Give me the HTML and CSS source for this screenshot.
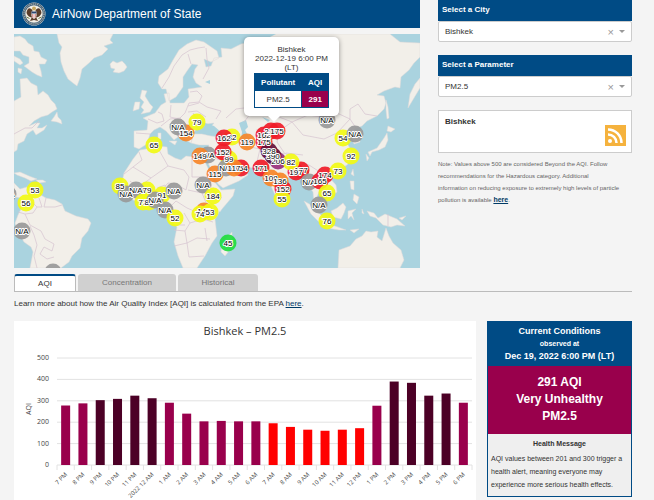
FILE: index.html
```html
<!DOCTYPE html>
<html lang="en">
<head>
  <meta charset="UTF-8">
  <meta name="viewport" content="width=device-width, initial-scale=1.0">
  <title>AirNow Department of State</title>
  <link rel="stylesheet" href="styles.css">
</head>
<body>
  <main class="page">
    <div class="top">
      <section class="map-column">
        <header class="site-header">
          <svg class="seal" viewBox="0 0 48 48" aria-hidden="true">
            <circle cx="24" cy="24" r="23" fill="#e8e4d8"/>
            <circle cx="24" cy="24" r="20" fill="none" stroke="#48647c" stroke-width="5"/>
            <circle cx="24" cy="24" r="20" fill="none" stroke="#d8d4c0" stroke-width="2" stroke-dasharray="2 2"/>
            <circle cx="24" cy="24" r="16" fill="#f4f2ea"/>
            <path d="M21 17 C16 9 10 13 9 22 C11 28 16 31 21 31Z M27 17 C32 9 38 13 39 22 C37 28 32 31 27 31Z" fill="#5a3d2a"/>
            <path d="M20 30 L16 38 L24 36 L32 38 L28 30Z" fill="#5a3d2a"/>
            <path d="M15 33 L9 30 M33 33 L39 30" stroke="#687848" stroke-width="2"/>
            <circle cx="24" cy="13" r="4" fill="#c8a860"/>
            <path d="M19 19 H29 V28 Q28 32 24 34 Q20 32 19 28Z" fill="#fff"/>
            <path d="M19 19 H29 V23 H19Z" fill="#2c4470"/>
            <path d="M21 24 V31 M24 24 V33 M27 24 V31" stroke="#b03030" stroke-width="1"/>
          </svg>
          <h1>AirNow Department of State</h1>
        </header>

        <div class="map">
          <svg class="map-canvas" viewBox="14 34 406 234" role="img" aria-label="World air quality map">
            <rect x="14" y="34" width="406" height="234" fill="#aad3df"/>
            <g class="land">
              <!-- Americas and Greenland -->
              <path d="M14 37 L20 36 25 39 28 43 33 46 34 51 39 52 41 57 47 60 45 64 39 64 41 71 42 77 37 75 32 72 28 69 24 66 29 63 29 57 23 55 20 51 14 51Z"/>
              <path d="M14 56 L20 59 23 63 20 65 14 61Z M18 68 L22 69 21 74 18 72Z"/>
              <path d="M20 79 L27 78 31 83 37 86 38 95 43 91 48 95 51 100 55 104 57 109 52 112 48 115 41 117 34 121 29 126 36 123 40 123 37 128 42 128 47 125 44 130 36 135 33 130 27 134 24 141 18 144 17 150 14 152 V101 L21 97Z"/>
              <path d="M57 112 L58 117 61 120 62 124 57 122 51 121 54 117Z"/>
              <path d="M57 34 L59 43 62 47 60 53 61 62 64 71 68 79 73 83 77 86 80 78 82 69 89 63 94 58 102 55 108 49 104 46 113 43 110 40 113 34Z"/>
              <path d="M110 64 L113 61 117 63 122 61 125 64 127 67 124 71 119 73 113 72 115 69 111 68Z"/>
              <path d="M14 173 L20 172 29 176 37 179 31 181 25 178 17 175Z M36 180 L43 180 46 182 39 183Z M14 183 L20 189 27 187 34 188 39 194 46 198 55 200 62 204 65 211 76 216 88 219 91 223 88 231 82 238 80 248 72 256 69 262 61 268 H30 L33 252 31 247 24 242 17 230 15 223 18 215 22 207 21 198 16 197 14 194Z"/>
              <!-- Europe and Asia -->
              <path d="M142 90 L147 91 145 96 150 104 153 107 150 112 141 114 144 110 141 107 144 102 140 98Z M135 102 L140 102 139 109 133 111 134 106Z"/>
              <path d="M158 83 L159 76 168 69 173 60 179 50 187 44 196 40 204 42 217 51 219 58 211 62 204 59 206 67 211 66 214 58 222 57 221 48 231 49 241 44 251 42 260 34 H390 L400 42 420 43 V57 L414 63 409 70 401 77 400 88 395 87 384 91 377 95 384 96 386 103 384 109 377 116 367 121 362 126 354 129 359 136 360 142 354 144 352 138 347 135 342 136 346 142 350 148 354 156 347 165 340 169 332 171 328 176 336 185 337 192 330 197 324 193 320 189 317 197 323 208 320 212 314 203 313 192 306 182 302 171 295 171 289 177 284 183 281 195 276 197 270 184 266 173 259 172 253 168 242 166 239 163 232 160 228 155 225 154 231 163 238 170 245 168 248 175 239 181 223 188 218 184 212 171 207 161 206 154 209 145 199 145 191 143 193 134 202 134 211 136 220 137 222 134 210 128 214 123 206 124 199 126 194 132 193 137 191 143 184 139 177 129 171 125 169 124 178 137 174 140 166 131 160 127 154 130 150 134 147 144 139 149 134 147 134 131 147 130 148 121 143 118 155 113 161 105 166 102 164 94 169 93 170 103 184 103 189 97 188 89 202 87 196 83 193 77 195 69 198 65 192 64 187 71 183 77 183 87 176 97 169 101 166 89 162 89Z"/>
              <path d="M169 141 L177 141 175 145Z M158 133 L161 133 161 139 158 139Z"/>
              <!-- Africa -->
              <path d="M140 150 L146 149 158 146 167 147 168 154 175 158 181 160 186 156 203 158 208 168 214 181 221 190 235 189 233 196 222 209 215 219 217 236 212 243 205 256 197 268 H183 L178 256 174 242 177 227 169 218 170 207 164 202 155 200 143 203 133 200 121 187 124 173 133 159Z"/>
              <path d="M232 232 L232 239 229 251 225 256 221 252 222 243Z"/>
              <!-- Asian and Pacific islands -->
              <path d="M388 126 L395 129 391 132 387 131Z M387 133 L388 140 385 147 379 150 372 152 370 156 368 152 377 148 384 138Z M366 154 L369 158 367 161Z"/>
              <path d="M386 100 L388 107 389 118 387 119 386 110Z M420 88 L414 98 408 108 410 94 415 84 420 78Z"/>
              <path d="M284 194 L287 198 285 201Z M351 174 L354 176 353 169Z M350 181 L354 181 354 190 351 189Z M354 194 L359 197 357 204 353 200Z"/>
              <path d="M304 201 L311 205 322 216 325 224 319 222 311 214Z M325 225 L335 226 346 230 339 230 327 228Z M331 211 L337 208 343 203 346 207 344 213 341 219 333 217Z M348 211 L356 209 352 213 354 220 351 216 348 219Z M350 230 L359 229 354 233Z"/>
              <path d="M367 211 L374 213 378 218 385 214 397 219 405 226 397 225 391 227 383 225 376 218 370 216Z M399 218 L406 216 402 220Z M362 209 L364 214 362 213Z"/>
              <path d="M338 268 L339 250 350 246 356 239 362 236 366 231 371 232 378 231 377 237 382 241 386 228 389 236 393 243 401 250 404 260 400 268Z"/>
            </g>
            <g class="water">
              <path d="M196 127 L202 122 208 124 214 126 222 133 211 135 202 133Z M239 123 L246 120 248 127 245 130 250 139 246 145 241 141 242 132Z"/>
              <path d="M200 34 H222 L231 38 227 44 219 41 217 47 210 44Z M250 34 H276 L268 38 256 39Z"/>
              <path d="M313 108 L321 103 323 99 320 101Z M205 82 L210 80 210 84Z M219 211 L222 215 218 217Z M262 117 L270 120 268 122Z"/>
            </g>
            <g class="borders">
              <path d="M14 134 L25 128 32 128 39 121 M34 193 L31 201 37 207 33 213 25 214 18 212 M46 198 L44 207 55 207 62 205 M39 198 L42 207 37 207 M25 214 L30 225 41 231 45 239 54 244 52 251 44 247 40 254 47 259 54 257 M30 226 L34 235 37 245 34 256 37 268"/>
              <path d="M162 88 L169 77 174 66 182 55 190 50 198 48 205 47 M191 64 L188 54 M206 48 L207 59 209 68 203 79 M190 92 L197 91 202 96 199 102 207 107 221 111 216 119 M199 102 L189 103 185 113 179 119 170 117 171 105 M148 119 L157 123 164 121 162 114 158 112 M136 133 L150 134 M161 126 L170 119 180 118 187 125 197 125 M188 106 L199 103 M188 112 L197 111 206 117 M178 120 L181 128 191 132 M193 113 L199 122"/>
              <path d="M139 152 L142 160 133 167 124 174 M133 167 L151 178 168 166 159 150 M168 166 L184 170 189 177 186 190 176 184 168 183 162 190 M192 158 V177 H211 M151 178 L143 184 145 192 139 202 M130 181 L137 187 150 184 M157 188 L165 185 169 193 166 202 M188 190 L202 193 214 188 M202 193 L207 205 201 214 187 208 176 201 170 207 M184 213 L190 223 185 231 174 230 M190 223 L203 219 213 222 M185 231 L187 243 174 246 M187 243 L197 238 210 239 M187 243 L189 257 204 256 M176 225 H185 M206 209 L215 216 M213 192 L222 198 M205 228 L207 241"/>
              <path d="M207 152 L214 158 224 161 229 170 221 179 M222 137 L231 150 239 163 M229 138 L238 142 M245 146 L260 149 256 166 M260 149 L268 153 275 151 284 154 M269 154 L277 160 296 170 M285 153 L294 161 309 165 308 174 316 183 M309 165 L323 174 333 171 M285 154 L277 142 279 131 292 122 308 115 322 117 337 113 350 119 M292 122 L303 135 324 139 337 133 350 119 M350 119 L350 109 358 104 365 114 377 116 M350 119 L356 128 M226 118 L236 109 252 107 263 115 279 117 292 122 M244 122 L251 113 M256 130 L267 131 280 127 M258 139 L269 145 M286 153 L303 155 M318 182 L324 190 M318 174 L325 180 M388 214 V226"/>
            </g>
            <g id="markers"></g>
            <g id="marker-labels"></g>
          </svg>

          <div class="popup">
            <p>Bishkek<br>2022-12-19 6:00 PM (LT)</p>
            <table>
              <tr><th class="pollutant">Pollutant</th><th>AQI</th></tr>
              <tr><td>PM2.5</td><td class="very-unhealthy">291</td></tr>
            </table>
          </div>
        </div>
      </section>

      <aside class="filters">
        <div class="filter">
          <label for="city">Select a City</label>
          <div class="select-box">
            <select id="city"><option>Bishkek</option></select>
            <button type="button" aria-label="Clear city">×</button>
            <span class="caret"></span>
          </div>
        </div>
        <div class="filter">
          <label for="parameter">Select a Parameter</label>
          <div class="select-box">
            <select id="parameter"><option>PM2.5</option></select>
            <button type="button" aria-label="Clear parameter">×</button>
            <span class="caret"></span>
          </div>
        </div>
        <div class="feed">
          <h2>Bishkek</h2>
          <a href="#rss" aria-label="RSS feed">
            <svg viewBox="0 0 21 21">
              <rect width="21" height="21" fill="#f5b23d"/>
              <circle cx="5" cy="16" r="2" fill="#fff"/>
              <path d="M3 9.500 A8.500 8.500 0 0 1 11.500 18 M3 4.500 A13.500 13.500 0 0 1 16.500 18" fill="none" stroke="#fff" stroke-width="2.500"/>
            </svg>
          </a>
        </div>
        <p class="note">Note: Values above 500 are considered Beyond the AQI. Follow recommendations for the Hazardous category. Additional<br>information on reducing exposure to extremely high levels of particle<br>pollution is available <a href="#beyond">here</a>.</p>
      </aside>
    </div>

    <nav class="tabs">
      <button type="button" class="active">AQI</button>
      <button type="button">Concentration</button>
      <button type="button">Historical</button>
    </nav>
    <p class="learn">Learn more about how the Air Quality Index [AQI] is calculated from the EPA <a href="#epa">here</a>.</p>

    <div class="bottom">
      <section class="chart">
        <svg viewBox="14 321 462 179" role="img" aria-label="Hourly AQI">
          <text class="chart-title" x="245" y="335">Bishkek – PM2.5</text>
          <text class="axis-title" transform="translate(31 409) rotate(-90)">AQI</text>
          <g id="grid"></g>
          <g id="bars"></g>
        </svg>
      </section>

      <section class="conditions">
        <div class="conditions-head">
          <h2>Current Conditions</h2>
          <p>observed at</p>
          <h2>Dec 19, 2022 6:00 PM (LT)</h2>
        </div>
        <div class="conditions-value very-unhealthy">291 AQI<br>Very Unhealthy<br>PM2.5</div>
        <div class="conditions-message">
          <h3>Health Message</h3>
          <p>AQI values between 201 and 300 trigger a health alert, meaning everyone may experience more serious health effects.</p>
        </div>
      </section>
    </div>
  </main>
  <script src="main.js"></script>
</body>
</html>
```

FILE: styles.css
```css
* {
  box-sizing: border-box;
}

body {
  margin: 0;
  background-color: #f4f4f4;
  color: #333;
  font-family: "Liberation Sans", Arial, sans-serif;
  font-size: 8px;
}

h1, h2, h3, p {
  margin: 0;
}

button, select {
  font-family: inherit;
  border: none;
  padding: 0;
}

.page {
  height: 100vh;
  padding: 0 22px 0 14px;
  display: flex;
  flex-direction: column;
  overflow: hidden;
}

.top {
  display: grid;
  grid-template-columns: 1fr 194px;
  gap: 18px;
}

.site-header {
  display: flex;
  align-items: center;
  gap: 6px;
  height: 28px;
  padding: 0 8px;
  margin-bottom: 6px;
  background-color: #004b85;
  color: #fff;
}

.site-header h1 {
  font-size: 12px;
  font-weight: normal;
}

.seal {
  width: 24px;
  height: 24px;
}

/* Map */
.map {
  position: relative;
}

.map-canvas {
  display: block;
  width: 100%;
}

.land {
  fill: #f2efe9;
  stroke: #dfd9d8;
  stroke-width: 0.5;
}

.water {
  fill: #aad3df;
}

.borders {
  fill: none;
  stroke: #d5c3d0;
  stroke-width: 0.7;
}

#marker-labels {
  font-size: 8px;
  text-anchor: middle;
  fill: #000;
  stroke: #fff;
  stroke-width: 2px;
  stroke-linejoin: round;
  paint-order: stroke;
}

.popup {
  position: absolute;
  left: 230px;
  top: 3px;
  width: 95px;
  padding: 8px 10px;
  border-radius: 5px;
  background-color: #fff;
  box-shadow: 0 1px 5px rgba(0, 0, 0, 0.4);
  text-align: center;
}

.popup::after {
  content: "";
  position: absolute;
  left: 24px;
  top: 100%;
  border: 6px solid transparent;
  border-top-color: #fff;
  border-bottom: none;
}

.popup p {
  font-size: 8px;
  line-height: 9px;
}

.popup table {
  width: 100%;
  margin-top: 1px;
  border-collapse: collapse;
  table-layout: fixed;
  font-size: 8px;
}

.popup th,
.popup td {
  height: 17px;
  padding: 0;
  border: 1px solid #004b85;
}

.popup th {
  background-color: #004b85;
  color: #fff;
}

.popup .pollutant {
  width: 64%;
}

.very-unhealthy,
.popup td.very-unhealthy {
  background-color: #99004c;
  color: #fff;
  font-weight: bold;
}

/* Filters */
.filter {
  margin-bottom: 13px;
}

.filter label {
  display: block;
  height: 21px;
  padding-left: 4px;
  background-color: #004b85;
  color: #fff;
  font-size: 8px;
  font-weight: bold;
  line-height: 20px;
}

.select-box {
  display: flex;
  align-items: center;
  height: 21px;
  padding: 0 6px;
  border: 1px solid #ccc;
  border-radius: 2px;
  background-color: #fff;
}

.select-box select {
  flex: 1;
  appearance: none;
  background: none;
  color: #333;
  font-size: 8px;
}

.select-box button {
  margin-right: 5px;
  background: none;
  color: #999;
  font-size: 11px;
}

.caret {
  border: 3px solid transparent;
  border-top-color: #999;
  border-bottom: none;
}

.feed {
  display: flex;
  justify-content: space-between;
  height: 43px;
  padding: 6px 5px 6px 6px;
  border: 1px solid #ccc;
  background-color: #fff;
}

.feed h2 {
  font-size: 8px;
}

.feed a {
  align-self: flex-end;
}

.feed svg {
  display: block;
  width: 21px;
  height: 21px;
}

.note {
  margin-top: 5px;
  color: #666;
  font-size: 6px;
  line-height: 12px;
}

.note a {
  color: #003a66;
  font-size: 7px;
  font-weight: bold;
}

/* Tabs */
.tabs {
  display: flex;
  gap: 2px;
  margin-top: 6px;
  border-bottom: 1px solid #bbb;
}

.tabs button {
  width: 80px;
  height: 17px;
  border-radius: 3px 3px 0 0;
  background-color: #d0d0d0;
  color: #777;
  font-size: 8px;
}

.tabs button:nth-child(2) {
  width: 98px;
}

.tabs .active {
  width: 62px;
  border: 1px solid #bbb;
  border-top: 2px solid #004b85;
  border-bottom: none;
  background-color: #fff;
  color: #333;
}

.learn {
  margin: 6px 0 11px;
  line-height: 12px;
}

.learn a {
  color: #003a66;
}

/* Chart and current conditions */
.bottom {
  flex: 1;
  display: grid;
  grid-template-columns: 1fr 145px;
  gap: 11px;
  min-height: 0;
}

.chart {
  background-color: #fff;
}

.chart svg {
  display: block;
  width: 100%;
}

.chart text {
  font-family: "Open Sans", sans-serif;
  font-size: 7px;
  fill: #444;
}

.chart .chart-title {
  font-size: 11px;
  text-anchor: middle;
  fill: #333;
}

.chart .axis-title {
  text-anchor: middle;
}

.chart .tick {
  text-anchor: end;
}

.chart .hour {
  font-size: 6px;
  text-anchor: end;
}

.chart line {
  stroke: #e2e2e2;
}

.conditions {
  align-self: start;
  border: 1px solid #004b85;
  background-color: #efefef;
  text-align: center;
}

.conditions-head {
  height: 44px;
  padding-top: 3px;
  background-color: #004b85;
  color: #fff;
  font-weight: bold;
}

.conditions-head h2 {
  font-size: 9px;
  line-height: 13px;
}

.conditions-head p {
  font-size: 7px;
  line-height: 12px;
}

.conditions-value {
  padding: 8px 0 9px;
  font-size: 12px;
  line-height: 17px;
}

.conditions-message {
  padding: 3px 3px 5px;
  font-size: 7px;
}

.conditions-message h3 {
  font-size: 7px;
  line-height: 13px;
}

.conditions-message p {
  margin-top: 2px;
  line-height: 13px;
  text-align: left;
}
```

FILE: main.js
```js
const svgNS = "http://www.w3.org/2000/svg";

const colors = {
  g: "#1fdc3f", y: "#f2fa14", o: "#f78528", r: "#f01c28",
  p: "#99307c", m: "#65103a", n: "#999999"
};

// x, y, label, color; later markers are drawn on top
const markers = [
  [8, 194, "N/A", "n"], [35, 190, "53", "y"], [26, 203, "56", "y"], [22, 231, "N/A", "n"], [53, 272, "", "n"],
  [154, 145, "65", "y"], [186, 133, "154", "o"], [178, 127, "N/A", "n"], [197, 122, "79", "y"],
  [120, 186, "85", "y"], [147, 190, "79", "y"], [136, 190, "N/A", "n"], [126, 194, "N/A", "n"],
  [162, 195, "91", "y"], [143, 202, "73", "y"], [149, 202, "86", "y"], [155, 200, "N/A", "n"],
  [174, 191, "N/A", "n"], [165, 210, "N/A", "n"], [175, 218, "52", "y"],
  [208, 155, "N/A", "n"], [200, 156, "149", "o"], [232, 137, "82", "y"], [224, 138, "162", "r"],
  [247, 142, "119", "o"], [229, 159, "99", "y"], [223, 152, "152", "r"],
  [215, 174, "115", "o"], [226, 168, "N/A", "n"], [241, 168, "154", "r"], [234, 168, "117", "o"],
  [203, 185, "N/A", "n"], [213, 196, "184", "y"], [204, 211, "145", "o"], [200, 214, "74", "y"],
  [210, 212, "53", "y"], [228, 243, "45", "g"],
  [264, 135, "162", "r"], [271, 131, "217", "r"], [277, 131, "175", "r"], [264, 142, "175", "r"],
  [278, 161, "206", "p"], [273, 156, "390", "m"], [269, 151, "328", "m"],
  [261, 168, "171", "r"], [301, 170, "177", "r"], [296, 172, "197", "r"], [291, 162, "82", "y"],
  [271, 178, "108", "o"], [280, 181, "136", "o"], [283, 189, "152", "r"], [282, 199, "55", "y"],
  [327, 120, "N/A", "n"], [343, 138, "54", "y"], [355, 134, "N/A", "n"], [351, 156, "92", "y"],
  [325, 175, "174", "r"], [309, 182, "N/A", "n"], [320, 181, "165", "r"], [338, 171, "73", "y"],
  [327, 193, "65", "y"], [319, 205, "N/A", "n"], [327, 221, "76", "y"]
];

const readings = [
  ["7 PM", 278], ["8 PM", 288], ["9 PM", 303], ["10 PM", 309], ["11 PM", 324], ["2022 12 AM", 312],
  ["1 AM", 291], ["2 AM", 240], ["3 AM", 204], ["4 AM", 206], ["5 AM", 204], ["6 AM", 204],
  ["7 AM", 195], ["8 AM", 178], ["9 AM", 165], ["10 AM", 160], ["11 AM", 165], ["12 PM", 172],
  ["1 PM", 277], ["2 PM", 390], ["3 PM", 384], ["4 PM", 324], ["5 PM", 334], ["6 PM", 291]
];

function add(parent, tag, attrs, text) {
  const el = document.createElementNS(svgNS, tag);
  for (const name in attrs) el.setAttribute(name, attrs[name]);
  if (text) el.textContent = text;
  parent.appendChild(el);
  return el;
}

function drawMarkers() {
  const circles = document.getElementById("markers");
  const labels = document.getElementById("marker-labels");
  for (const [x, y, label, color] of markers) {
    add(circles, "circle", { cx: x, cy: y, r: 8.5, fill: colors[color], "fill-opacity": 0.92 });
    if (label) add(labels, "text", { x: x, y: y + 3 }, label);
  }
}

function barColor(value) {
  if (value > 300) return "#4c0026";
  if (value > 200) return "#99004c";
  return "#ff0000";
}

function drawChart() {
  const grid = document.getElementById("grid");
  const bars = document.getElementById("bars");
  const left = 57, right = 472, bottom = 465;
  const scale = 0.214;
  const step = (right - left) / readings.length;

  for (let v = 0; v <= 500; v += 100) {
    const y = bottom - v * scale;
    add(grid, "line", { x1: left, x2: right, y1: y, y2: y });
    add(grid, "text", { class: "tick", x: 49, y: y + 2 }, String(v));
  }

  readings.forEach(([label, value], i) => {
    const x = left + step * (i + 0.5);
    add(grid, "line", { x1: x - step / 2, x2: x - step / 2, y1: bottom, y2: bottom + 5 });
    add(bars, "rect", {
      x: x - 4.5, y: bottom - value * scale, width: 9, height: value * scale, fill: barColor(value)
    });
    add(bars, "text", { class: "hour", transform: `translate(${x + 2} 475) rotate(-45)` }, label);
  });
  add(grid, "line", { x1: right, x2: right, y1: bottom, y2: bottom + 5 });
}

drawMarkers();
drawChart();
```
